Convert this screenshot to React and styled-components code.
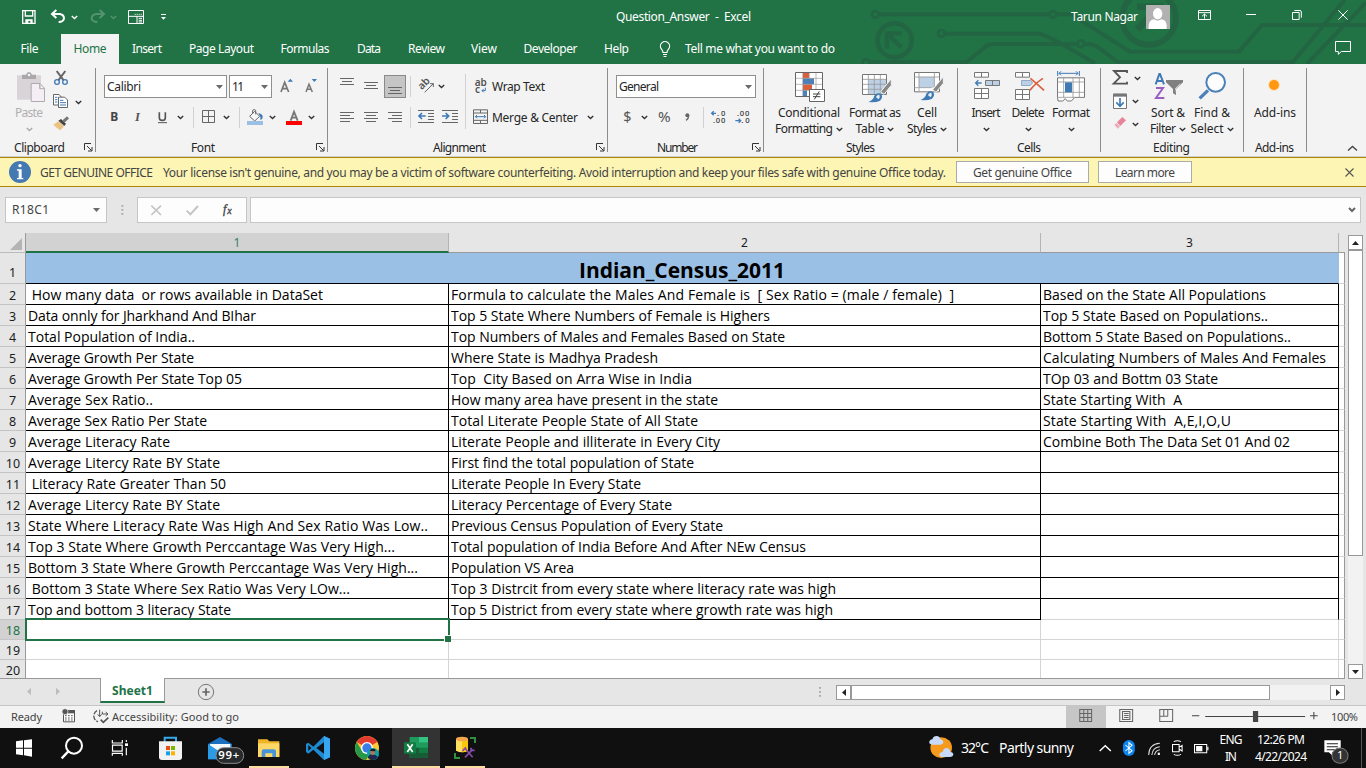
import React, { useLayoutEffect, useRef } from "react";
import styled, { createGlobalStyle, css } from "styled-components";

const GREEN = "#217346";

const Global = createGlobalStyle`
  * { box-sizing: border-box; }
  body { margin: 0; overflow: hidden; }
`;

const Window = styled.div`
  width: 1366px;
  height: 768px;
  display: flex;
  flex-direction: column;
  overflow: hidden;
  background: #e6e6e6;
  color: #262626;
  font: 12px/16px "Noto Sans", "Open Sans", sans-serif;
`;

/* Text tracked so that it fills a known width. */
const Track = styled.span`
  display: inline-block;
  white-space: pre;
  flex: none;
`;

function Fit({ w, children }) {
  const ref = useRef(null);
  useLayoutEffect(() => {
    const el = ref.current;
    el.style.letterSpacing = "0px";
    const natural = el.getBoundingClientRect().width;
    const n = Math.max(1, el.textContent.length - 1);
    el.style.letterSpacing = `${(w - natural) / n}px`;
    el.style.marginRight = `${-(w - natural) / n}px`;
  }, [w, children]);
  return <Track ref={ref}>{children}</Track>;
}

const Svg = styled.svg`
  display: block;
  flex: none;
  overflow: visible;
  margin-left: ${(p) => p.$ml || 0}px;
`;

/* Artwork is drawn on a finer grid: k units across and three down per pixel. */
function Art({ x, y, w, h, ml, k = 3, children }) {
  return (
    <Svg width={w} height={h} $ml={ml} viewBox={`${x} ${y} ${w * k} ${h * 3}`} preserveAspectRatio="none" fill="none">
      {children}
    </Svg>
  );
}

const FINE = 2.872;

function Chevron({ ml, color = "#333" }) {
  return (
    <Svg width="7" height="5" $ml={ml} viewBox="0 0 7 5" fill="none">
      <path d="M.8 .9 3.5 3.5 6.2 .9" stroke={color} strokeWidth="1.4" />
    </Svg>
  );
}

/* ---------- Title area ---------- */

const Header = styled.header`
  height: 64px;
  flex: none;
  position: relative;
  background: ${GREEN};
  color: #fff;
`;

const Circuit = styled.div`
  position: absolute;
  top: 0;
  right: 0;
  height: 64px;
  overflow: hidden;
`;

const TitleBar = styled.div`
  position: relative;
  height: 34px;
  display: flex;
  align-items: center;
`;

const Spacer = styled.div`
  width: ${(p) => p.$w}px;
  flex: none;
`;

const Grow = styled.div`
  flex: 1;
`;

const TabRow = styled.nav`
  position: relative;
  height: 30px;
  display: flex;
`;

const Tab = styled.div`
  width: ${(p) => p.$w}px;
  height: 30px;
  display: flex;
  align-items: center;
  justify-content: center;
  margin-left: ${(p) => p.$ml || 0}px;
  background: ${(p) => (p.$active ? "#f3f3f3" : "transparent")};
  color: ${(p) => (p.$active ? GREEN : "#fff")};
`;

const Bulb = styled(Svg)`
  margin-top: 7px;
`;

/* ---------- Ribbon ---------- */

const Ribbon = styled.section`
  height: 93px;
  flex: none;
  display: flex;
  padding-top: 4px;
  background: #f3f3f3;
  border-bottom: 1px solid #d0d0d0;
`;

const Group = styled.div`
  width: ${(p) => p.$w}px;
  height: 88px;
  flex: none;
  display: flex;
  flex-direction: column;
  background: linear-gradient(#8c8c8c, #8c8c8c) right top / 1px 84px no-repeat;
`;

const GroupBody = styled.div`
  height: 72px;
  display: flex;
`;

const GroupLabel = styled.div`
  height: 17px;
  display: flex;
  align-items: center;
  padding-left: ${(p) => p.$pad}px;
`;

const Column = styled.div`
  display: flex;
  flex-direction: column;
  flex: none;
  margin-left: ${(p) => p.$ml || 0}px;
  width: ${(p) => (p.$w ? p.$w + "px" : "auto")};
`;

const ToolRow = styled.div`
  display: flex;
  align-items: center;
  height: ${(p) => p.$h}px;
  margin-top: ${(p) => p.$mt}px;
`;

const Combo = styled.div`
  width: ${(p) => p.$w}px;
  height: 23px;
  flex: none;
  display: flex;
  align-items: center;
  justify-content: space-between;
  padding: 0 3px 0 2px;
  margin-left: ${(p) => p.$ml || 0}px;
  border: 1px solid #8f8f8f;
  background: #fff;
`;

const Rule = styled.div`
  width: 1px;
  height: ${(p) => p.$h || 21}px;
  margin-left: ${(p) => p.$ml || 0}px;
  margin-top: ${(p) => p.$mt || 0}px;
  background: ${(p) => p.$c || "#d2d0d2"};
  flex: none;
`;

const Pressed = styled.div`
  width: 22px;
  height: 23px;
  flex: none;
  margin-left: 6px;
  background: #c5c5c5;
  border: 1px solid #8a8a8a;
`;

const BigButton = styled.div`
  width: ${(p) => p.$w}px;
  margin-left: ${(p) => p.$ml || 0}px;
  flex: none;
  display: flex;
  flex-direction: column;
  align-items: center;
  color: ${(p) => (p.$off ? "#b1afb1" : "#262626")};
`;

const BigIcon = styled.div`
  width: 100%;
  height: 37px;
`;

const BigLine = styled.div`
  height: 16px;
  display: flex;
  align-items: center;
  gap: 3px;
`;

const CollapseWrap = styled.div`
  flex: 1;
  display: flex;
  align-items: flex-end;
  padding: 0 0 4px 40px;
`;

const DropArrow = () => (
  <Svg width="7" height="4" viewBox="0 0 7 4">
    <path d="M0 0h7L3.5 4z" fill="#6a6a6a" />
  </Svg>
);

const Launcher = ({ ml }) => (
  <Svg width="9" height="9" $ml={ml} viewBox="0 0 9 9" fill="none" stroke="#333">
    <path d="M.5 7V.5H7M3 3l4.5 4.5M8 4v4H4" />
  </Svg>
);

/* ---------- Notice ---------- */

const Notice = styled.div`
  height: 30px;
  flex: none;
  display: flex;
  align-items: center;
  background: #fcf5b4;
  border-top: 1px solid #ac8705;
  border-bottom: 1px solid #ac8705;
  color: #444;
`;

const NoticeText = styled.div`
  display: flex;
  gap: 10px;
  padding-top: 2px;
`;

const NoticeButton = styled.div`
  width: ${(p) => p.$w}px;
  height: 22px;
  padding-top: 1px;
  margin-left: ${(p) => p.$ml}px;
  display: flex;
  align-items: center;
  justify-content: center;
  background: #fdfdfd;
  border: 1px solid #ababab;
`;

/* ---------- Formula bar ---------- */

const FormulaBar = styled.div`
  height: 46px;
  flex: none;
  display: flex;
  align-items: flex-start;
  padding: 10px 5px 0;
`;

const Box = styled.div`
  width: ${(p) => p.$w}px;
  height: 26px;
  margin-left: ${(p) => p.$ml || 0}px;
  flex: none;
  display: flex;
  align-items: center;
  justify-content: space-between;
  padding: 0 ${(p) => (p.$pad === undefined ? 6 : p.$pad)}px;
  background: #fdfdfd;
  border: 1px solid #c6c6c6;
  color: #444;
`;

/* ---------- Grid ---------- */

const SheetArea = styled.div`
  height: 446px;
  flex: none;
  display: flex;
`;

const Sheet = styled.div`
  width: 1345px;
  height: 446px;
  overflow: hidden;
  border-bottom: 1px solid #999;
`;

const SheetRow = styled.div`
  display: flex;
  height: ${(p) => p.$h}px;
`;

const Corner = styled.div`
  width: 26px;
  height: 20px;
  padding: 5px 0 0 10px;
  border-right: 1px solid #999;
  border-bottom: 1px solid #bbb;
`;

const ColHead = styled.div`
  width: ${(p) => p.$w}px;
  height: 20px;
  display: flex;
  justify-content: center;
  align-items: center;
  padding-top: ${(p) => (p.$active ? 1 : 0)}px;
  font-size: 12px;
  background: ${(p) => (p.$active ? "#d2d2d2" : "transparent")};
  color: ${(p) => (p.$active ? "#3a7f6d" : "#1c1c1c")};
  border-right: 1px solid #b4b4b4;
  border-bottom: ${(p) => (p.$active ? `2px solid ${GREEN}` : "1px solid #999")};
`;

const HeadTail = styled.div`
  width: 6px;
  height: 20px;
  border-bottom: 1px solid #999;
`;

const RowHead = styled.div`
  width: 26px;
  flex: none;
  display: flex;
  align-items: flex-end;
  justify-content: center;
  padding-left: ${(p) => (p.$wide ? 1 : 0)}px;
  padding-bottom: ${(p) => (p.$tall ? 2 : 0)}px;
  line-height: 17px;
  font-size: 12.5px;
  background: ${(p) => (p.$active ? "#d2d2d2" : "#e6e6e6")};
  color: ${(p) => (p.$active ? GREEN : "#1c1c1c")};
  border-right: 1px solid #999;
  border-bottom: 1px solid #c4c4c4;
`;

const Cell = styled.div`
  width: ${(p) => p.$w}px;
  flex: none;
  position: relative;
  display: flex;
  align-items: center;
  padding: 1px 0 0 2px;
  background: #fff;
  color: #000;
  font: 14px/19px "Open Sans", "Noto Sans", sans-serif;
  border-right: 1px solid ${(p) => (p.$right ? "#000" : "#d4d4d4")};
  border-bottom: 1px solid ${(p) => (p.$bottom ? "#000" : "#d4d4d4")};
`;

const TitleCell = styled(Cell)`
  justify-content: center;
  padding: 3px 0 0;
  background: #9bc0e6;
  font: bold 21px/28px "Open Sans", "Noto Sans", sans-serif;
  border-right-color: #9bc0e6;
`;

const Tail = styled.div`
  width: 6px;
  flex: none;
  background: #fff;
  border-right: 1px solid #999;
  border-bottom: 1px solid #d4d4d4;
`;

const Selection = styled.div`
  position: absolute;
  z-index: 2;
  left: -1px;
  top: -2px;
  width: 425px;
  height: 23px;
  border: 2px solid ${GREEN};
  &::after {
    content: "";
    position: absolute;
    right: -3px;
    bottom: -3px;
    width: 6px;
    height: 6px;
    background: ${GREEN};
    border: 1px solid #fff;
    border-width: 1px 0 0 1px;
  }
`;

const VScroll = styled.div`
  margin: 2px 0 0 3px;
  width: 15px;
  height: 444px;
  display: flex;
  flex-direction: column;
  background: #f2f2f2;
`;

const ScrollButton = styled.div`
  width: 15px;
  height: 15px;
  flex: none;
  display: flex;
  align-items: center;
  justify-content: center;
  background: #fff;
  border: 1px solid #999;
`;

const Thumb = styled.div`
  background: #fff;
  border: 1px solid #999;
  ${(p) => (p.$v ? css`height: ${p.$len}px; width: 15px;` : css`width: ${p.$len}px; height: 15px;`)}
`;

/* ---------- Sheet tabs and status ---------- */

const SheetBar = styled.div`
  height: 28px;
  margin-top: -1px;
  flex: none;
  display: flex;
  border-bottom: 1px solid #c6c6c6;
`;

const SheetTab = styled.div`
  position: relative;
  width: 65px;
  height: 25px;
  margin-left: 34px;
  padding-top: 3px;
  display: flex;
  align-items: center;
  justify-content: center;
  background: #fff;
  color: ${GREEN};
  font-weight: 700;
  border: 1px solid #999;
  border-top: 0;
  border-bottom: 2px solid ${GREEN};
`;

const HScroll = styled.div`
  width: 509px;
  height: 15px;
  margin: 7px 0 0 12px;
  display: flex;
  background: #f2f2f2;
`;

const StatusBar = styled.div`
  height: 22px;
  flex: none;
  display: flex;
  align-items: center;
  background: #f3f3f3;
  color: #444;
  font-size: 11px;
`;

const ViewButton = styled.div`
  width: ${(p) => p.$w}px;
  height: 22px;
  background: ${(p) => (p.$active ? "#c6c6c6" : "transparent")};
`;

/* ---------- Taskbar ---------- */

const Taskbar = styled.footer`
  height: 40px;
  flex: none;
  display: flex;
  background: #101010;
  color: #fff;
`;

const Task = styled.div`
  width: 48px;
  height: 40px;
  flex: none;
  margin-left: ${(p) => p.$ml || 0}px;
  background: ${(p) => (p.$active ? "#333" : "transparent")};
  ${(p) =>
    p.$line &&
    css`
      background-image: linear-gradient(#fcdca0, #fcdca0);
      background-size: ${p.$line}px 2px;
      background-position: center bottom;
      background-repeat: no-repeat;
    `}
`;

const Stack = styled.div`
  width: ${(p) => p.$w}px;
  margin-left: ${(p) => p.$ml || 0}px;
  flex: none;
  display: flex;
  flex-direction: column;
  align-items: center;
  padding-top: 3px;
  line-height: 17px;
`;

const Weather = styled.div`
  display: flex;
  align-items: center;
  font-size: 14px;
`;

/* ---------- Data ---------- */

const rows = [
  [[" How many data  or rows available in DataSet", 295], ["Formula to calculate the Males And Female is  [ Sex Ratio = (male / female)  ]", 503], ["Based on the State All Populations", 223]],
  [["Data onnly for Jharkhand And BIhar", 228], ["Top 5 State Where Numbers of Female is Highers", 319], ["Top 5 State Based on Populations..", 225]],
  [["Total Population of India..", 167], ["Top Numbers of Males and Females Based on State", 334], ["Bottom 5 State Based on Populations..", 248]],
  [["Average Growth Per State", 166], ["Where State is Madhya Pradesh", 207], ["Calculating Numbers of Males And Females", 283]],
  [["Average Growth Per State Top 05", 214], ["Top  City Based on Arra Wise in India", 241], ["TOp 03 and Bottm 03 State", 175]],
  [["Average Sex Ratio..", 125], ["How many area have present in the state", 267], ["State Starting With  A", 139]],
  [["Average Sex Ratio Per State", 179], ["Total Literate People State of All State", 247], ["State Starting With  A,E,I,O,U", 188]],
  [["Average Literacy Rate", 142], ["Literate People and illiterate in Every City", 269], ["Combine Both The Data Set 01 And 02", 247]],
  [["Average Litercy Rate BY State", 192], ["First find the total population of State", 243]],
  [[" Literacy Rate Greater Than 50", 198], ["Literate People In Every State", 190]],
  [["Average Litercy Rate BY State", 192], ["Literacy Percentage of Every State", 221]],
  [["State Where Literacy Rate Was High And Sex Ratio Was Low..", 400], ["Previous Census Population of Every State", 272]],
  [["Top 3 State Where Growth Perccantage Was Very High...", 367], ["Total population of India Before And After NEw Census", 355]],
  [["Bottom 3 State Where Growth Perccantage Was Very High...", 390], ["Population VS Area", 123]],
  [[" Bottom 3 State Where Sex Ratio Was Very LOw...", 322], ["Top 3 Distrcit from every state where literacy rate was high", 385]],
  [["Top and bottom 3 literacy State", 203], ["Top 5 District from every state where growth rate was high", 382]],
];

const tabs = [
  ["File", 18, 59, 0], ["Home", 33, 58, 2, true], ["Insert", 30, 56, 0], ["Page Layout", 65, 93, 0],
  ["Formulas", 49, 74, 0], ["Data", 24, 54, 0], ["Review", 37, 61, 0], ["View", 26, 54, 0],
  ["Developer", 54, 79, 0], ["Help", 25, 53, 0],
];

const GR = "#777";
const BL = "#3f7ab5";

function TitleSection() {
  return (
    <Header>
      <Circuit>
        <Art x={0} y={0} w={526} h={64} k={2.981}>
          <g stroke="#236542" strokeWidth="12">
            <circle cx="105" cy="43" r="10" strokeWidth="8" />
            <circle cx="635" cy="43" r="10" strokeWidth="8" />
            <circle cx="302" cy="100" r="10" strokeWidth="8" />
            <circle cx="718" cy="131" r="10" strokeWidth="8" />
            <circle cx="77" cy="188" r="10" strokeWidth="8" />
            <path d="M117 43H623M647 43H690L865 155H1190L1258 75H1568" />
            <path d="M314 101H595Q620 105 760 190" />
            <path d="M88 186H378L430 143Q442 132 455 132H706M730 132Q755 130 775 146L828 186H1350L1504 0M1392 192L1568 8" />
            <circle cx="163" cy="121" r="51" strokeWidth="14" />
            <path d="M140 146V100H184M143 103L183 142" strokeWidth="13" />
            <circle cx="921" cy="54" r="80" strokeWidth="18" />
            <path d="M885 20H955V72M950 24L886 88" strokeWidth="20" />
          </g>
        </Art>
      </Circuit>
      <TitleBar>
        <Art x={66} y={0} w={14} h={34} ml={22}>
          <path d="M68 32H105V70H68zM76 32V48H98V32" stroke="#fff" strokeWidth="4" />
          <path d="M76 58H98V72H91V63H85V72H76z" fill="#fff" />
        </Art>
        <Art x={150} y={0} w={16} h={34} ml={14}>
          <path d="M157 42H180Q192 44 192 56Q190 66 176 66M169 30L156 42L169 54" stroke="#fff" strokeWidth="6" />
        </Art>
        <Chevron ml={5} color="#fff" />
        <Art x={268} y={0} w={16} h={34} ml={12}>
          <path d="M309 42H286Q273 44 273 56Q275 66 290 66M297 30L310 42L297 54" stroke="#549370" strokeWidth="6" />
        </Art>
        <Chevron ml={4} color="#549370" />
        <Art x={384} y={0} w={16} h={34} ml={11}>
          <path d="M385.500 31.500H430.500V70.500H385.500zM385 49H430M411 49V70" stroke="#fff" strokeWidth="3" />
          <path d="M404 43h3m3 0h3m3 0h3m3 0h3M416 55H426M416 61H426M416 66H426" stroke="#fff" strokeWidth="3" />
        </Art>
        <Art x={486} y={0} w={6} h={34} ml={17}>
          <path d="M486 43.500H501" stroke="#fff" strokeWidth="3" />
          <path d="M486 51H501L493.500 59z" fill="#fff" />
        </Art>
        <Spacer $w={449} />
        <Fit w={135}>Question_Answer  -  Excel</Fit>
        <Grow />
        <Fit w={67}>Tarun Nagar</Fit>
        <Art x={738} y={0} w={24} h={34} ml={8}>
          <path d="M738 15H810V87H738z" fill="#b1b1b1" />
          <ellipse cx="773" cy="41" rx="14" ry="17" fill="#fff" />
          <path d="M746 87V76Q748 59 762 58Q773 65 784 58Q799 60 800 76V87z" fill="#fff" />
        </Art>
        <Art x={894} y={0} w={13} h={34} ml={28}>
          <path d="M895.500 31.500H931.500V58.500H895.500zM895 38H931M913.500 56V42M906 49L913.500 42L921 49" stroke="#fff" strokeWidth="3" />
        </Art>
        <Art x={1038} y={0} w={10} h={34} ml={35}>
          <path d="M1038 43.500H1068" stroke="#fff" strokeWidth="3" />
        </Art>
        <Art x={1176} y={0} w={10} h={34} ml={36}>
          <path d="M1177.500 37.500H1197.500V58.500H1177.500zM1183 31.500H1200Q1204 32 1204 36V53" stroke="#fff" strokeWidth="3" />
        </Art>
        <Art x={1314} y={0} w={10} h={34} ml={36}>
          <path d="M1315 31L1343 59M1343 31L1315 59" stroke="#fff" strokeWidth="3" />
        </Art>
        <Spacer $w={18} />
      </TitleBar>
      <TabRow>
        {tabs.map(([t, tw, w, ml, active]) => (
          <Tab key={t} $w={w} $ml={ml} $active={active}><Fit w={tw}>{t}</Fit></Tab>
        ))}
        <Bulb width="12" height="17" $ml={16} viewBox="0 0 12 17" fill="none" stroke="#fff" strokeWidth="1.200">
          <path d="M4 11.500Q4 10 2.500 8.200A4.600 4.600 0 1 1 9.500 8.200Q8 10 8 11.500zM4 13.500H8M4.600 15.500H7.400" />
        </Bulb>
        <Tab $w={150} $ml={14}><Fit w={150}>Tell me what you want to do</Fit></Tab>
        <Grow />
        <Art x={1305} y={102} w={16} h={30}>
          <path d="M1306.500 124.500H1351.500V154.500H1324L1315 163V154.500H1306.500z" stroke="#fff" strokeWidth="3" />
        </Art>
        <Spacer $w={15} />
      </TabRow>
    </Header>
  );
}

function HLines({ d, c = "#666" }) {
  return <path d={d} stroke={c} strokeWidth="3" />;
}

function RibbonSection() {
  return (
    <Ribbon>
      <Group $w={96}>
        <GroupBody>
          <BigButton $w={32} $ml={13} $off>
            <BigIcon>
              <Art x={39} y={204} w={32} h={36}>
                <path d="M51 226H123V299H51z" fill="#d8d4d8" />
                <path d="M66 224H78Q80 216 87 216Q94 216 96 224H108V237H66z" fill="#aaa8aa" />
                <circle cx="87" cy="225" r="4" fill="#f3f3f3" />
                <path d="M93.500 250.500H120L133.500 265V304.500H93.500zM119 251V266H133" fill="#f5eef5" stroke="#b0aab0" strokeWidth="3" />
              </Art>
            </BigIcon>
            <BigLine><Fit w={28}>Paste</Fit></BigLine>
            <BigLine><Chevron color="#aaa" /></BigLine>
          </BigButton>
          <Column $ml={7} $w={40}>
            <Art x={156} y={204} w={18} h={22}>
              <path d="M170 213L191 241M196 213L175 241" stroke="#666" strokeWidth="6" />
              <circle cx="171" cy="246" r="7" stroke={BL} strokeWidth="4" />
              <circle cx="195" cy="246" r="7" stroke={BL} strokeWidth="4" />
            </Art>
            <ToolRow $h={24} $mt={0}>
              <Art x={156} y={270} w={18} h={24}>
                <path d="M160.500 283.500H177L184 291V315H160.500z" fill="#fff" stroke="#666" strokeWidth="3" />
                <path d="M165 292H172M165 299H172M165 306H172" stroke={BL} strokeWidth="3" />
                <path d="M175.500 291.500H194L202.500 300V322.500H175.500z" fill="#fff" stroke="#666" strokeWidth="3" />
                <path d="M180 301H190M180 308H198M180 315H198" stroke={BL} strokeWidth="3" />
              </Art>
              <Chevron ml={5} />
            </ToolRow>
            <Art x={156} y={342} w={18} h={24}>
              <path d="M160 374L175 364L192 379L181 391Q170 384 160 374z" fill="#eac282" />
              <path d="M175 362L183 357L198 371L193 378z" fill="#444" />
              <path d="M190 365L204 352" stroke="#777" strokeWidth="9" />
            </Art>
          </Column>
        </GroupBody>
        <GroupLabel $pad={14}><Fit w={51}>Clipboard</Fit><Launcher ml={19} /></GroupLabel>
      </Group>

      <Group $w={232}>
        <GroupBody>
          <Column $ml={8}>
            <ToolRow $h={23} $mt={7}>
              <Combo $w={123}><Fit w={34}>Calibri</Fit><DropArrow /></Combo>
              <Combo $w={43} $ml={2}><Fit w={12}>11</Fit><DropArrow /></Combo>
              <Art x={840} y={225} w={14} h={23} ml={8}>
                <path d="M843 276L854 247L866 276M847 266H862" stroke={GR} strokeWidth="5" />
                <path d="M863 245H879L871 236z" fill={BL} />
              </Art>
              <Art x={915} y={225} w={13} h={23} ml={11}>
                <path d="M918 276L927 253L937 276M921 268H934" stroke={GR} strokeWidth="4.500" />
                <path d="M935 237H951L943 246z" fill={BL} />
              </Art>
            </ToolRow>
            <ToolRow $h={21} $mt={9}>
              <Art x={324} y={321} w={14} h={21} ml={4}>
                <text x="331" y="364" fill="#444" fontSize="36" fontWeight="700">B</text>
              </Art>
              <Art x={396} y={321} w={14} h={21} ml={10}>
                <text x="405" y="364" fill="#555" fontSize="38" fontFamily="Liberation Serif" fontWeight="700" fontStyle="italic">I</text>
              </Art>
              <Art x={468} y={321} w={14} h={21} ml={10}>
                <path d="M478 337V353Q478 361 487 361Q496 361 496 353V337" stroke="#555" strokeWidth="5" />
                <path d="M474 368H501" stroke="#555" strokeWidth="3" />
              </Art>
              <Chevron ml={7} />
              <Rule $ml={9} />
              <Art x={606} y={321} w={13} h={21} ml={8}>
                <path d="M607.500 331.500H643.500V367.500H607.500zM625.500 331V368M607 349.500H643" stroke="#666" strokeWidth="3" />
              </Art>
              <Chevron ml={8} />
              <Rule $ml={9} />
              <Art x={741} y={321} w={16} h={21} ml={7}>
                <path d="M749 349L764 334L779 349L764 363z" fill="#f7f7f7" stroke="#666" strokeWidth="3" />
                <path d="M758 341V331Q763 326 767 331V343" stroke="#666" strokeWidth="3" />
                <path d="M775 339Q790 343 788 352Q788 358 781 360Q783 350 775 339z" fill={BL} />
                <path d="M741 363H789V375H741z" fill="#9bc0e6" />
              </Art>
              <Chevron ml={6} />
              <Art x={858} y={321} w={16} h={21} ml={10}>
                <path d="M872 362L882 335L893 362M875 353H889" stroke={GR} strokeWidth="5.500" />
                <path d="M858 363H906V375H858z" fill="#fe0000" />
              </Art>
              <Chevron ml={6} />
            </ToolRow>
          </Column>
        </GroupBody>
        <GroupLabel $pad={95}><Fit w={24}>Font</Fit><Launcher ml={101} /></GroupLabel>
      </Group>

      <Group $w={280}>
        <GroupBody>
          <Column $ml={12} $w={125}>
            <ToolRow $h={23} $mt={7}>
              <Art x={1020} y={225} w={14} h={23}>
                <HLines d="M1020 235.500H1062M1026 244.500H1056M1020 253.500H1062" />
              </Art>
              <Art x={1092} y={225} w={14} h={23} ml={10}>
                <HLines d="M1092 247.500H1134M1098 256.500H1128M1092 265.500H1134" />
              </Art>
              <Pressed>
                <Art x={1155} y={228} w={20} h={21}>
                  <HLines d="M1164 262.500H1206M1170 271.500H1200M1164 280.500H1206" />
                </Art>
              </Pressed>
              <Rule $ml={4} />
              <Art x={1254} y={225} w={16} h={23} ml={7}>
                <text transform="translate(1265 271) rotate(-45)" fontSize="31" fontWeight="600" fill="#555">ab</text>
                <path d="M1274 277L1300 251M1290 251H1300V261" stroke="#666" strokeWidth="3" />
              </Art>
              <Chevron ml={4} />
            </ToolRow>
            <ToolRow $h={21} $mt={9}>
              <Art x={1020} y={321} w={14} h={21}>
                <HLines d="M1020 337.500H1062M1020 346.500H1050M1020 355.500H1062M1020 364.500H1050" />
              </Art>
              <Art x={1092} y={321} w={14} h={21} ml={10}>
                <HLines d="M1092 337.500H1134M1098 346.500H1128M1092 355.500H1134M1098 364.500H1128" />
              </Art>
              <Art x={1164} y={321} w={14} h={21} ml={10}>
                <HLines d="M1164 337.500H1206M1176 346.500H1206M1164 355.500H1206M1176 364.500H1206" />
              </Art>
              <Rule $ml={8} />
              <Art x={1254} y={321} w={16} h={21} ml={7}>
                <HLines d="M1254 331.500H1302M1284 340.500H1302M1284 349.500H1302M1284 358.500H1302M1254 367.500H1302" />
                <path d="M1277 348H1257M1266 339L1257 348L1266 357" stroke={BL} strokeWidth="5" />
              </Art>
              <Art x={1326} y={321} w={16} h={21} ml={8}>
                <HLines d="M1326 331.500H1374M1356 340.500H1374M1356 349.500H1374M1356 358.500H1374M1326 367.500H1374" />
                <path d="M1326 348H1346M1337 339L1346 348L1337 357" stroke={BL} strokeWidth="5" />
              </Art>
            </ToolRow>
          </Column>
          <Rule $h={55} $mt={6} />
          <Column $ml={7}>
            <ToolRow $h={23} $mt={7}>
              <Art x={39} y={45} w={16} h={23}>
                <text x="44" y="79" fontSize="30" fontWeight="600" fill="#555" textLength="36">ab</text>
                <text x="45" y="98" fontSize="30" fontWeight="600" fill="#555">c</text>
                <path d="M76 83V92H66M71 87L66 92L71 97" stroke={BL} strokeWidth="3" />
              </Art>
              <Spacer $w={3} />
              <Fit w={53}>Wrap Text</Fit>
            </ToolRow>
            <ToolRow $h={21} $mt={9}>
              <Art x={39} y={141} w={16} h={21}>
                <path d="M40.500 149.500H82.500V190.500H40.500zM40 159H82M40 181H82M61.500 150V159M61.500 181V190" stroke="#666" strokeWidth="3" />
                <path d="M46 170H77M51 165L46 170L51 175M72 165L77 170L72 175" stroke={BL} strokeWidth="3" />
              </Art>
              <Spacer $w={3} />
              <Fit w={86}>Merge & Center</Fit>
              <Chevron ml={9} />
            </ToolRow>
          </Column>
        </GroupBody>
        <GroupLabel $pad={105}><Fit w={53}>Alignment</Fit><Launcher ml={110} /></GroupLabel>
      </Group>

      <Group $w={156}>
        <GroupBody>
          <Column $ml={8}>
            <ToolRow $h={23} $mt={7}>
              <Combo $w={140}><Fit w={40}>General</Fit><DropArrow /></Combo>
            </ToolRow>
            <ToolRow $h={21} $mt={9}>
              <Art x={486} y={141} w={11} h={21} ml={6}>
                <text x="490" y="187" fontSize="43" fill="#555">$</text>
              </Art>
              <Chevron ml={8} />
              <Art x={597} y={141} w={15} h={21} ml={9}>
                <text x="600" y="187" fontSize="43" fill="#555" textLength="38" lengthAdjust="spacingAndGlyphs">%</text>
              </Art>
              <Art x={678} y={141} w={8} h={21} ml={12}>
                <circle cx="688" cy="166" r="6" fill="#666" />
                <path d="M692 167Q692 176 684 181" stroke="#666" strokeWidth="4" />
              </Art>
              <Rule $ml={11} />
              <Art x={759} y={141} w={15} h={21} ml={7}>
                <text x="777" y="167" fontSize="23" fontWeight="500" fill="#333" textLength="25">.0</text>
                <text x="765" y="189" fontSize="23" fontWeight="500" fill="#333" textLength="37">.00</text>
                <path d="M774 160H761M767 154L761 160L767 166" stroke={BL} strokeWidth="4" />
              </Art>
              <Art x={831} y={141} w={15} h={21} ml={9}>
                <text x="837" y="167" fontSize="23" fontWeight="500" fill="#333" textLength="37">.00</text>
                <text x="850" y="189" fontSize="23" fontWeight="500" fill="#333" textLength="25">.0</text>
                <path d="M832 182H848M842 176L848 182L842 188" stroke={BL} strokeWidth="4" />
              </Art>
            </ToolRow>
          </Column>
        </GroupBody>
        <GroupLabel $pad={49}><Fit w={41}>Number</Fit><Launcher ml={54} /></GroupLabel>
      </Group>

      <Group $w={194}>
        <GroupBody>
          <BigButton $w={70} $ml={10}>
            <BigIcon>
              <Art x={942} y={24} w={70} h={36}>
                <path d="M1006 37H1088V109H1006z" fill="#fff" />
                <path d="M1029 38H1047V55H1029zM1029 73H1056V91H1029z" fill="#dc5f3c" />
                <path d="M1029 55H1062V73H1029zM1029 91H1041V108H1029z" fill="#4b80b8" />
                <path d="M1028 37V109M1048 37V56M1068 37V90M1006 55H1088M1006 73H1088M1006 91H1050" stroke="#999" strokeWidth="2" />
                <path d="M1006.500 37.500H1087.500V109.500H1006.500z" stroke="#666" strokeWidth="3" />
                <path d="M1048.500 88.500H1093.500V124.500H1048.500z" fill="#fff" stroke="#666" strokeWidth="3" />
                <path d="M1059 102H1081M1059 110H1081M1078 94L1063 118" stroke="#444" strokeWidth="3" />
              </Art>
            </BigIcon>
            <BigLine><Fit w={62}>Conditional</Fit></BigLine>
            <BigLine><Fit w={58}>Formatting</Fit><Chevron /></BigLine>
          </BigButton>
          <BigButton $w={54} $ml={4}>
            <BigIcon>
              <Art x={1164} y={24} w={54} h={36}>
                <path d="M1207 43H1279V103H1207z" fill="#fff" />
                <path d="M1226 58H1279V103H1226z" fill="#bcd0e6" />
                <path d="M1225 43V103M1243 43V103M1261 43V103M1207 58H1279M1207 73H1279M1207 88H1279" stroke="#999" strokeWidth="2.500" />
                <path d="M1207.500 43.500H1279.500V103.500H1207.500z" stroke="#777" strokeWidth="3" />
                <path d="M1294 56L1262 95L1272 103L1294 76z" fill="#888" stroke="#f3f3f3" strokeWidth="3" />
                <path d="M1225 126Q1240 120 1243 107Q1252 95 1264 103Q1270 113 1260 122Q1248 128 1225 126z" fill={BL} />
                <path d="M1248 112Q1250 103 1258 104Q1262 112 1256 118z" fill="#e8eef6" />
              </Art>
            </BigIcon>
            <BigLine><Fit w={52}>Format as</Fit></BigLine>
            <BigLine><Fit w={29}>Table</Fit><Chevron /></BigLine>
          </BigButton>
          <BigButton $w={44} $ml={3}>
            <BigIcon>
              <Art x={15} y={204} w={44} h={36}>
                <path d="M43.500 217.500H118.500V275.500H43.500z" fill="#fff" stroke="#777" strokeWidth="3" />
                <path d="M57 231H103V263H57z" fill="#bcd0e6" />
                <path d="M57 217V276M103 217V262M43 231H118M43 263H95" stroke="#999" strokeWidth="2.500" />
                <path d="M130 230L98 269L108 277L130 250z" fill="#888" stroke="#f3f3f3" strokeWidth="3" />
                <path d="M61 300Q76 294 79 281Q88 269 100 277Q106 287 96 296Q84 302 61 300z" fill={BL} />
                <path d="M84 286Q86 277 94 278Q98 286 92 292z" fill="#e8eef6" />
              </Art>
            </BigIcon>
            <BigLine><Fit w={20}>Cell</Fit></BigLine>
            <BigLine><Fit w={30}>Styles</Fit><Chevron /></BigLine>
          </BigButton>
        </GroupBody>
        <GroupLabel $pad={82}><Fit w={29}>Styles</Fit></GroupLabel>
      </Group>

      <Group $w={143}>
        <GroupBody>
          <BigButton $w={40} $ml={8}>
            <BigIcon>
              <Art x={198} y={204} w={40} h={36}>
                <path d="M223.500 217.500H265.500V231.500H223.500zM244.500 217V231M223.500 265.500H265.500V295.500H223.500zM244.500 265V295M223 280.500H265" fill="#fff" stroke={GR} strokeWidth="3" />
                <path d="M256.500 241.500H298.500V256.500H256.500zM277.500 241V256" fill="#bcd0e6" stroke={GR} strokeWidth="3" />
                <path d="M245 249H227M235 241L227 249L235 257" stroke={BL} strokeWidth="4" />
              </Art>
            </BigIcon>
            <BigLine><Fit w={29}>Insert</Fit></BigLine>
            <BigLine><Chevron /></BigLine>
          </BigButton>
          <BigButton $w={42} $ml={1}>
            <BigIcon>
              <Art x={321} y={204} w={42} h={36}>
                <path d="M346.500 217.500H388.500V231.500H346.500zM367.500 217V231M346.500 268.500H388.500V298.500H346.500zM367.500 268V298M346 283.500H388" fill="#fff" stroke={GR} strokeWidth="3" />
                <path d="M364.500 241.500H392L398 249L390 256.500H364.500z" fill="#bcd0e6" stroke="#8fa9c9" strokeWidth="3" />
                <path d="M391 235Q410 250 432 271M429 235Q405 250 390 271" stroke="#dc5f3c" strokeWidth="5" />
              </Art>
            </BigIcon>
            <BigLine><Fit w={33}>Delete</Fit></BigLine>
            <BigLine><Chevron /></BigLine>
          </BigButton>
          <BigButton $w={42} $ml={1}>
            <BigIcon>
              <Art x={450} y={204} w={42} h={36}>
                <path d="M473 213V228M538 213V228M477 220H534M483 214L477 220L483 226M528 214L534 220L528 226" stroke={BL} strokeWidth="3" />
                <path d="M472.500 233.500H553.500V292.500H524L514 303H502L496 296L488 303H474L472.500 292z" fill="#fff" stroke={GR} strokeWidth="3" />
                <path d="M491 233V293M519 233V293M538 233V293M472 246H553M472 277H553M472 292H553" stroke="#999" strokeWidth="2.500" />
                <path d="M495 247H516V277H495z" fill={BL} />
              </Art>
            </BigIcon>
            <BigLine><Fit w={38}>Format</Fit></BigLine>
            <BigLine><Chevron /></BigLine>
          </BigButton>
        </GroupBody>
        <GroupLabel $pad={59}><Fit w={24}>Cells</Fit></GroupLabel>
      </Group>

      <Group $w={143}>
        <GroupBody>
          <Column $ml={10} $w={36}>
            <ToolRow $h={20} $mt={0}>
              <Art x={633} y={204} w={17} h={20}>
                <path d="M681 219V213H642L660 232L641 251H681V245" stroke="#555" strokeWidth="5.500" />
              </Art>
              <Chevron ml={6} />
            </ToolRow>
            <ToolRow $h={24} $mt={1}>
              <Art x={633} y={267} w={17} h={24}>
                <path d="M640.500 282.500H679.500V325.500H640.500z" fill="#fff" stroke={GR} strokeWidth="3" />
                <path d="M640 281H680V290H640z" fill={GR} />
                <path d="M660 294V318M649 307L660 319L671 307" stroke={BL} strokeWidth="5" />
              </Art>
              <Chevron ml={4} />
            </ToolRow>
            <ToolRow $h={22} $mt={0}>
              <Art x={633} y={339} w={17} h={22}>
                <path d="M651 367L667 351L678 361L661 378z" fill="#e8839a" />
                <path d="M643 375L649 369L660 379L654 386z" fill="#f0a9b7" />
              </Art>
              <Chevron ml={4} />
            </ToolRow>
          </Column>
          <BigButton $w={44} $ml={-1}>
            <BigIcon>
              <Art x={735} y={204} w={44} h={36}>
                <path d="M764 253L775 222H777L789 253M768 243H786" stroke={BL} strokeWidth="6" />
                <path d="M765 264H786L765 294H790" stroke="#9a5fc0" strokeWidth="6" />
                <path d="M795 240H846V247L825 267V285L816 280V267L795 247z" fill="#808080" />
                <path d="M822 266L838 250V252L824 268V280z" fill="#eee" />
              </Art>
            </BigIcon>
            <BigLine><Fit w={34}>Sort &</Fit></BigLine>
            <BigLine><Fit w={26}>Filter</Fit><Chevron /></BigLine>
          </BigButton>
          <BigButton $w={42} $ml={1}>
            <BigIcon>
              <Art x={870} y={204} w={42} h={36}>
                <path d="M896 295L921 271" stroke="#4b80b8" strokeWidth="10" />
                <circle cx="944" cy="247" r="28" fill="#fdfdfd" stroke="#4b80b8" strokeWidth="6" />
              </Art>
            </BigIcon>
            <BigLine><Fit w={36}>Find &</Fit></BigLine>
            <BigLine><Fit w={33}>Select</Fit><Chevron /></BigLine>
          </BigButton>
        </GroupBody>
        <GroupLabel $pad={52}><Fit w={37}>Editing</Fit></GroupLabel>
      </Group>

      <Group $w={63}>
        <GroupBody>
          <BigButton $w={62}>
            <BigIcon>
              <Art x={1032} y={204} w={62} h={36}>
                <circle cx="1122" cy="255" r="18" fill="#ffe3b8" />
                <circle cx="1122" cy="255" r="15" fill="#ff9710" />
              </Art>
            </BigIcon>
            <BigLine><Fit w={42}>Add-ins</Fit></BigLine>
          </BigButton>
        </GroupBody>
        <GroupLabel $pad={11}><Fit w={39}>Add-ins</Fit></GroupLabel>
      </Group>
      <CollapseWrap>
        <Svg width="11" height="7" viewBox="0 0 11 7" fill="none">
          <path d="M1 5.500 5.500 1.500 10 5.500" stroke="#444" strokeWidth="1.400" />
        </Svg>
      </CollapseWrap>
    </Ribbon>
  );
}

function NoticeSection() {
  return (
    <Notice>
      <Art x={27} y={9} w={22} h={28} ml={9}>
        <circle cx="60" cy="51" r="33" fill="#4479b2" />
        <circle cx="60" cy="32" r="5" fill="#fff" />
        <path d="M51 43H65V69H70V73H51V69H56V47H51z" fill="#fff" />
      </Art>
      <Spacer $w={9} />
      <NoticeText>
        <Fit w={113}>GET GENUINE OFFICE</Fit>
        <Fit w={783}>Your license isn't genuine, and you may be a victim of software counterfeiting. Avoid interruption and keep your files safe with genuine Office today.</Fit>
      </NoticeText>
      <NoticeButton $w={133} $ml={10}><Fit w={99}>Get genuine Office</Fit></NoticeButton>
      <NoticeButton $w={94} $ml={9}><Fit w={60}>Learn more</Fit></NoticeButton>
      <Grow />
      <Svg width="9" height="9" viewBox="0 0 9 9" stroke="#555" strokeWidth="1.100"><path d="M.5 .5l8 8M8.500 .5l-8 8" /></Svg>
      <Spacer $w={12} />
    </Notice>
  );
}

function FormulaSection() {
  return (
    <FormulaBar>
      <Box $w={102}><Fit w={37}>R18C1</Fit><DropArrow /></Box>
      <Art x={362} y={126} w={3} h={26} ml={14}>
        <path d="M363 150h6v5h-6zM363 162h6v5h-6zM363 174h6v5h-6z" fill="#aaa" />
      </Art>
      <Box $w={110} $ml={13} $pad={0}>
        <Art x={414} y={129} w={108} h={24}>
          <path d="M454 152L483 180M483 152L454 180" stroke="#c4c4c4" strokeWidth="5" />
          <path d="M560 167L571 178L594 153" stroke="#c4c4c4" strokeWidth="6" />
          <text x="669" y="175" fontSize="36" fontFamily="Liberation Serif" fontStyle="italic" fill="#444" stroke="#444">f</text>
          <text x="682" y="178" fontSize="30" fontFamily="Liberation Serif" fontStyle="italic" fill="#444" stroke="#444">x</text>
        </Art>
      </Box>
      <Box $w={1111} $ml={3} $pad={4}><Grow /><Svg width="8" height="6" viewBox="0 0 8 6" fill="none"><path d="M1 1l3 3 3-3" stroke="#666" strokeWidth="2" /></Svg></Box>
    </FormulaBar>
  );
}

function Grid() {
  return (
    <SheetArea>
      <Sheet>
        <SheetRow $h={20}>
          <Corner><Svg width="12" height="12" viewBox="0 0 12 12"><path d="M12 0V12H0z" fill="#b4b4b4" /></Svg></Corner>
          <ColHead $w={423} $active>1</ColHead>
          <ColHead $w={592}>2</ColHead>
          <ColHead $w={298}>3</ColHead>
          <HeadTail />
        </SheetRow>
        <SheetRow $h={31}>
          <RowHead $tall>1</RowHead>
          <TitleCell $w={1313} $bottom><Fit w={206}>Indian_Census_2011</Fit></TitleCell>
          <Tail />
        </SheetRow>
        {rows.map((cells, i) => (
          <SheetRow key={i} $h={21}>
            <RowHead $wide={i > 7}>{i + 2}</RowHead>
            {[423, 592, 298].map((w, c) => (
              <Cell key={c} $w={w} $right $bottom={!(c === 2 && i === 15)}>
                {cells[c] && <Fit w={cells[c][1]}>{cells[c][0]}</Fit>}
              </Cell>
            ))}
            <Tail />
          </SheetRow>
        ))}
        {[18, 19, 20].map((n) => (
          <SheetRow key={n} $h={20}>
            <RowHead $wide $active={n === 18}>{n}</RowHead>
            <Cell $w={423}>{n === 18 && <Selection />}</Cell>
            <Cell $w={592} />
            <Cell $w={298} />
            <Tail />
          </SheetRow>
        ))}
      </Sheet>
      <VScroll>
        <ScrollButton><Svg width="7" height="4" viewBox="0 0 7 4"><path d="M0 4h7L3.500 0z" fill="#222" /></Svg></ScrollButton>
        <Thumb $v $len={306} />
        <Grow />
        <ScrollButton><Svg width="7" height="4" viewBox="0 0 7 4"><path d="M0 0h7L3.500 4z" fill="#222" /></Svg></ScrollButton>
      </VScroll>
    </SheetArea>
  );
}

function BottomBars() {
  return (
    <>
      <SheetBar>
        <Art x={81} y={234} w={33} h={28} ml={27}>
          <path d="M93 263V286L81 274.500z" fill="#bdbdbd" />
          <path d="M168 263V286L180 274.500z" fill="#bdbdbd" />
        </Art>
        <Spacer $w={6} />
        <SheetTab><Fit w={41}>Sheet1</Fit></SheetTab>
        <Art x={594} y={234} w={16} h={28} ml={33}>
          <circle cx="618" cy="276" r="23" stroke="#777" strokeWidth="3" />
          <path d="M607 276H629M618 265V287" stroke="#666" strokeWidth="5" />
        </Art>
        <Grow />
        <Art x={1137} y={54} w={2} h={28}>
          <path d="M1137 81h6v5h-6zM1137 93h6v5h-6zM1137 105h6v5h-6z" fill="#aaa" />
        </Art>
        <Spacer $w={3} />
        <HScroll>
          <ScrollButton><Svg width="4" height="7" viewBox="0 0 4 7"><path d="M4 0v7L0 3.500z" fill="#222" /></Svg></ScrollButton>
          <Thumb $len={419} />
          <Grow />
          <ScrollButton><Svg width="4" height="7" viewBox="0 0 4 7"><path d="M0 0v7l4-3.500z" fill="#222" /></Svg></ScrollButton>
        </HScroll>
        <Spacer $w={21} />
      </SheetBar>
      <StatusBar>
        <Spacer $w={11} />
        <Fit w={31}>Ready</Fit>
        <Art x={186} y={321} w={14} h={22} ml={20}>
          <path d="M190.500 336.500H223.500V368.500H190.500z" fill="#fff" stroke="#555" strokeWidth="3" />
          <path d="M202 333H225V343H202z" fill="#555" />
          <path d="M195 350h5m4 0h5m4 0h5M195 357h5m4 0h5m4 0h5M195 363h5m4 0h5m4 0h5" stroke="#555" strokeWidth="3" />
          <circle cx="195" cy="338" r="9" fill="#555" stroke="#f3f3f3" strokeWidth="2" />
        </Art>
        <Art x={279} y={321} w={16} h={22} ml={17}>
          <path d="M291 335A18 18 0 0 0 294 368" stroke="#555" strokeWidth="4" strokeDasharray="14 4" />
          <path d="M299 332V352M293 346L299 353L305 346M307 338V345H324M317 339L324 345L317 351" stroke="#555" strokeWidth="3" />
          <path d="M302 362L310 370L325 356" stroke="#555" strokeWidth="5" />
        </Art>
        <Spacer $w={3} />
        <Fit w={127}>Accessibility: Good to go</Fit>
        <Grow />
        <ViewButton $w={40} $active>
          <Art x={706} y={321} w={40} h={22} k={FINE}>
            <path d="M745.500 331.500H779.500V367.500H745.500zM757 331V367M768.500 331V367M745 343.500H779M745 355.500H779" stroke="#666" strokeWidth="3" />
          </Art>
        </ViewButton>
        <ViewButton $w={40}>
          <Art x={821} y={321} w={40} h={22} k={FINE}>
            <path d="M860.500 331.500H897.500V367.500H860.500zM868.500 337.500H889.500V361.500H868.500zM873 343.500H886M873 349.500H886M873 355.500H886" stroke="#666" strokeWidth="3" />
          </Art>
        </ViewButton>
        <ViewButton $w={38}>
          <Art x={936} y={321} w={38} h={22} k={FINE}>
            <path d="M975.500 331.500H1012.500V367.500H975.500zM987 331V352M998.500 331V352M975 352H999" stroke="#666" strokeWidth="3" />
          </Art>
        </ViewButton>
        <Art x={1068} y={321} w={126} h={22} ml={8} k={FINE}>
          <path d="M1068 350.500H1089M1106 352.500H1393M1407 350.500H1429M1418 339V361" stroke="#444" strokeWidth="3" />
          <path d="M1243 336H1258V369H1243z" fill="#444" />
        </Art>
        <Spacer $w={13} />
        <Fit w={27}>100%</Fit>
        <Spacer $w={8} />
      </StatusBar>
    </>
  );
}

function TaskbarSection() {
  return (
    <Taskbar>
      <Task><Art x={0} y={384} w={48} h={40}>
        <path d="M48 424L69 421V443H48zM72 421L96 418V443H72zM48 446H69V466L48 463zM72 446H96V470L72 466z" fill="#fff" />
      </Art></Task>
      <Task><Art x={144} y={384} w={48} h={40}>
        <circle cx="222" cy="437" r="24" stroke="#fff" strokeWidth="6" /><path d="M205 454L185 475" stroke="#fff" strokeWidth="7" />
      </Art></Task>
      <Task><Art x={288} y={384} w={48} h={40}>
        <path d="M337 420V429H367V420M337.500 435.500H366.500V453.500H337.500zM337 467V460H367V467M379 420V426M379 443V466" stroke="#fff" strokeWidth="3.500" />
        <path d="M375 430H384V438H375z" fill="#fff" />
      </Art></Task>
      <Task $ml={3}><Art x={441} y={384} w={48} h={40}>
        <path d="M494 430V413H528V430" stroke="#35a9ea" strokeWidth="6" />
        <path d="M477 424H546V474Q545 480 538 480H486Q478 480 477 473z" fill="#f2f2f2" />
        <path d="M498 438H510V450H498z" fill="#e54b1d" /><path d="M513 438H525V450H513z" fill="#7cb700" />
        <path d="M498 454H510V466H498z" fill="#16a1e8" /><path d="M513 454H525V466H513z" fill="#fbb400" />
      </Art></Task>
      <Task $ml={1}><Art x={588} y={384} w={48} h={40}>
        <path d="M624 432L660 411L696 432V478H624z" fill="#1b6fc0" />
        <path d="M630 432H691V450L660 468L630 448z" fill="#f3f8fc" />
        <path d="M624 432L664 458L696 478H624z" fill="#2a9be4" />
        <rect x="648" y="443" width="83" height="47" rx="23" fill="#272b2e" stroke="#8b8b8b" strokeWidth="3" />
        <text x="655" y="476" fontSize="34" fontWeight="600" fill="#fff" textLength="63">99+</text>
      </Art></Task>
      <Task $ml={1} $line={40}><Art x={735} y={384} w={48} h={40}>
        <path d="M774 418H802L808 424H838V471H774z" fill="#f0b429" />
        <path d="M774 430H838V471H774z" fill="#ffd766" />
        <path d="M785 471V454Q785 448 791 448H822Q828 448 828 454V471H817V460H796V471z" fill="#4795d8" />
      </Art></Task>
      <Task $ml={1}><Art x={882} y={384} w={48} h={40}>
        <path d="M972 408L990 416V472L972 480L940 449L925 461L918 456V432L925 428L940 440z" fill="#1f8ad2" />
        <path d="M972 427V461L949 444z" fill="#101010" />
        <path d="M925 435V453L934 444z" fill="#101010" />
        <path d="M972 408L990 416V472L972 480z" fill="#38a5ef" />
      </Art></Task>
      <Task $ml={1}><Art x={1029} y={384} w={48} h={40}>
        <circle cx="1101" cy="444" r="36" fill="#fcc934" />
        <path d="M1101 444L1070 426A36 36 0 0 1 1132 426z" fill="#e33b2e" />
        <path d="M1070 426A36 36 0 0 0 1098 480L1112 457L1086 452z" fill="#279847" />
        <circle cx="1101" cy="444" r="18" fill="#fff" /><circle cx="1101" cy="444" r="14" fill="#3a7ce8" />
        <circle cx="1119" cy="462" r="18" fill="#0aa3a8" />
        <path d="M1103 473Q1108 462 1116 463Q1127 462 1134 472Q1125 483 1112 479z" fill="#23264d" />
        <ellipse cx="1118" cy="456" rx="7" ry="9" fill="#b87456" /><path d="M1110 453Q1112 442 1126 448V454z" fill="#1b1b25" />
      </Art></Task>
      <Task $ml={1} $active $line={48}><Art x={1176} y={384} w={48} h={40}>
        <path d="M1229 411H1284V474H1229z" fill="#1f9c5d" /><path d="M1257 411H1284V427H1257z" fill="#33c481" />
        <path d="M1257 443H1284V459H1257z" fill="#107c41" /><path d="M1229 443H1257V474H1229z" fill="#185c37" />
        <path d="M1257 459H1284V474H1257z" fill="#185c37" />
        <path d="M1212 427H1248V461H1212z" fill="#107c41" />
        <path d="M1222 433L1238 456M1238 433L1222 456" stroke="#fff" strokeWidth="5" />
      </Art></Task>
      <Task $ml={1} $line={40}><Art x={3} y={204} w={48} h={40}>
        <path d="M48 237V272Q66 282 84 272V237z" fill="#ffe05e" /><path d="M66 237H84V272Q75 277 66 277z" fill="#fbc70b" />
        <ellipse cx="66" cy="237" rx="18" ry="7" fill="#f3a64d" />
        <path d="M90 234H105V249M45 279V294H60" stroke="#2f9140" strokeWidth="6" />
        <path d="M75 292L98 268M98 292L76 266M67 273L78 262M93 263V271H104" stroke="#854bab" strokeWidth="5" />
      </Art></Task>
      <Grow />
      <Weather>
        <Art x={312} y={384} w={24} h={40} k={FINE}>
          <circle cx="347" cy="443" r="31" fill="#f59a1d" />
          <path d="M320 434Q311 432 313 424Q317 417 322 418Q324 408 334 408Q343 409 345 418Q354 420 353 428Q351 434 344 434z" fill="#c8daf7" />
          <path d="M348 471Q340 468 342 461Q346 455 351 456Q354 443 364 444Q373 447 373 455Q382 457 382 464Q380 471 372 471z" fill="#c8daf7" />
        </Art>
        <Spacer $w={8} />
        <Fit w={28}>32°C</Fit>
        <Spacer $w={10} />
        <Fit w={75}>Partly sunny</Fit>
      </Weather>
      <Art x={801} y={384} w={12} h={40} ml={25} k={FINE}><path d="M803 453L819 437L835 453" stroke="#fff" strokeWidth="4" /></Art>
      <Art x={870} y={384} w={12} h={40} ml={12} k={FINE}>
        <rect x="870" y="420" width="34" height="48" rx="17" fill="#0a84f0" />
        <path d="M877 435L896 452L887 460V428L896 436L877 453" stroke="#fff" strokeWidth="3" />
      </Art>
      <Art x={942} y={384} w={13} h={40} ml={13} k={FINE}>
        <path d="M944 465Q945 432 976 430M953 465Q955 442 976 440M961 465Q963 451 976 449" stroke="#ddd" strokeWidth="3" />
        <path d="M970 458H976V465H970z" fill="#fff" />
      </Art>
      <Art x={1011} y={384} w={11} h={40} ml={11} k={FINE}>
        <path d="M1012.500 433.500H1031.500V455.500H1012.500zM1031 442L1040 436V453L1031 447M1016 425Q1026 419 1037 425M1016 463Q1026 469 1037 463" stroke="#fff" strokeWidth="3" />
      </Art>
      <Art x={1074} y={384} w={15} h={40} ml={11} k={FINE}>
        <path d="M1075.500 433.500H1110.500V458.500H1075.500zM1114 440V451" stroke="#fff" strokeWidth="3" /><path d="M1080 438H1098V454H1080z" fill="#fff" />
      </Art>
      <Stack $w={26} $ml={9}><Fit w={23}>ENG</Fit><Fit w={12}>IN</Fit></Stack>
      <Stack $w={56} $ml={9}><Fit w={48}>12:26 PM</Fit><Fit w={52}>4/22/2024</Fit></Stack>
      <Art x={1449} y={384} w={25} h={40} ml={15} k={FINE}>
        <path d="M1450 421H1497V457H1472V466L1463 457H1450z" fill="#fff" /><path d="M1457 431H1489M1457 440H1489M1457 449H1480" stroke="#222" strokeWidth="3" />
        <circle cx="1495" cy="467" r="23" fill="#333" stroke="#777" strokeWidth="3" />
        <text x="1486" y="478" fontSize="32" fill="#fff">1</text>
      </Art>
      <Rule $ml={12} $h={40} $c="#555" />
      <Spacer $w={4} />
    </Taskbar>
  );
}

export default function App() {
  return (
    <>
      <Global />
      <Window>
        <TitleSection />
        <RibbonSection />
        <NoticeSection />
        <FormulaSection />
        <Grid />
        <BottomBars />
        <TaskbarSection />
      </Window>
    </>
  );
}
